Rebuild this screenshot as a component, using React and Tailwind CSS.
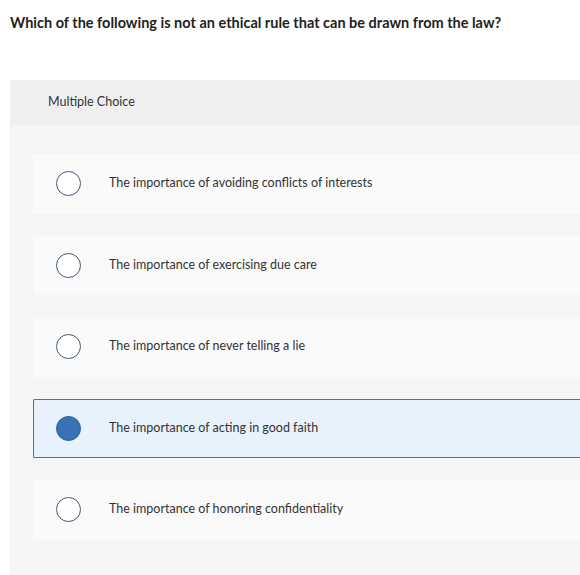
const OPTIONS = [
  'The importance of avoiding conflicts of interests',
  'The importance of exercising due care',
  'The importance of never telling a lie',
  'The importance of acting in good faith',
  'The importance of honoring confidentiality',
];

const SELECTED = 3;

export default function App() {
  return (
    <div className="h-[575px] w-[580px] overflow-hidden bg-white font-['Lato','Open_Sans',sans-serif] text-[#333]">
      <h1 className="px-[10px] pt-[14px] text-[14.5px] font-bold leading-[18px] text-[#222]">
        Which of the following is not an ethical rule that can be drawn from the law?
      </h1>

      <div className="ml-[10px] mt-[48px] bg-[#f5f5f5]">
        <div className="flex h-[45px] items-center bg-[#efefef] pl-[38px] text-[12.5px] text-[#333]">
          Multiple Choice
        </div>

        <div className="flex flex-col gap-[22px] pb-[40px] pl-[23px] pt-[29px]">
          {OPTIONS.map((label, i) => {
            const active = i === SELECTED;
            return (
              <div
                key={label}
                className={`flex h-[59.5px] items-center ${
                  active
                    ? 'rounded-l-[2px] border border-r-0 border-[#5b7186] bg-[#e8f2fc] pl-[22px]'
                    : 'bg-[#fafafa] pl-[23px]'
                }`}
              >
                <span
                  className={`h-[25px] w-[25px] shrink-0 rounded-full border-[1.5px] ${
                    active ? 'border-[#2f5f96] bg-[#3a73b5]' : 'border-[#3d5a75] bg-white'
                  }`}
                />
                <span className="ml-[28px] text-[12.5px] text-[#333]">{label}</span>
              </div>
            );
          })}
        </div>
      </div>
    </div>
  );
}
